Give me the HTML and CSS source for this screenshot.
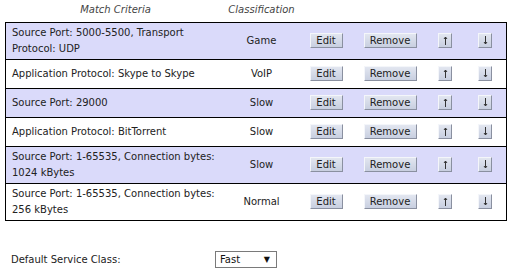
FILE: index.html
```html
<!DOCTYPE html>
<html lang="en">
<head>
    <meta charset="UTF-8">
    <title>QoS Classification Rules</title>
    <link rel="stylesheet" href="styles.css">
</head>
<body>
    <table class="rules">
        <colgroup>
            <col class="col-criteria">
            <col class="col-class">
            <col class="col-edit">
            <col class="col-remove">
            <col class="col-up">
            <col class="col-down">
        </colgroup>
        <thead>
            <tr>
                <th>Match Criteria</th>
                <th>Classification</th>
                <th></th>
                <th></th>
                <th></th>
                <th></th>
            </tr>
        </thead>
        <tbody>
            <tr class="shade">
                <td class="criteria">Source Port: 5000-5500, Transport Protocol: UDP</td>
                <td class="cls">Game</td>
                <td><button class="btn btn-edit">Edit</button></td>
                <td><button class="btn btn-remove">Remove</button></td>
                <td><button class="btn btn-arrow"><svg width="5" height="9" viewBox="0 0 5 9"><path d="M2.5 1V9M1 3L2.5 1L4 3" stroke="#333" fill="none"/></svg></button></td>
                <td><button class="btn btn-arrow"><svg width="5" height="9" viewBox="0 0 5 9"><path d="M2.5 0V8M1 6L2.5 8L4 6" stroke="#333" fill="none"/></svg></button></td>
            </tr>
            <tr>
                <td class="criteria">Application Protocol: Skype to Skype</td>
                <td class="cls">VoIP</td>
                <td><button class="btn btn-edit">Edit</button></td>
                <td><button class="btn btn-remove">Remove</button></td>
                <td><button class="btn btn-arrow"><svg width="5" height="9" viewBox="0 0 5 9"><path d="M2.5 1V9M1 3L2.5 1L4 3" stroke="#333" fill="none"/></svg></button></td>
                <td><button class="btn btn-arrow"><svg width="5" height="9" viewBox="0 0 5 9"><path d="M2.5 0V8M1 6L2.5 8L4 6" stroke="#333" fill="none"/></svg></button></td>
            </tr>
            <tr class="shade">
                <td class="criteria">Source Port: 29000</td>
                <td class="cls">Slow</td>
                <td><button class="btn btn-edit">Edit</button></td>
                <td><button class="btn btn-remove">Remove</button></td>
                <td><button class="btn btn-arrow"><svg width="5" height="9" viewBox="0 0 5 9"><path d="M2.5 1V9M1 3L2.5 1L4 3" stroke="#333" fill="none"/></svg></button></td>
                <td><button class="btn btn-arrow"><svg width="5" height="9" viewBox="0 0 5 9"><path d="M2.5 0V8M1 6L2.5 8L4 6" stroke="#333" fill="none"/></svg></button></td>
            </tr>
            <tr>
                <td class="criteria">Application Protocol: BitTorrent</td>
                <td class="cls">Slow</td>
                <td><button class="btn btn-edit">Edit</button></td>
                <td><button class="btn btn-remove">Remove</button></td>
                <td><button class="btn btn-arrow"><svg width="5" height="9" viewBox="0 0 5 9"><path d="M2.5 1V9M1 3L2.5 1L4 3" stroke="#333" fill="none"/></svg></button></td>
                <td><button class="btn btn-arrow"><svg width="5" height="9" viewBox="0 0 5 9"><path d="M2.5 0V8M1 6L2.5 8L4 6" stroke="#333" fill="none"/></svg></button></td>
            </tr>
            <tr class="shade">
                <td class="criteria">Source Port: 1-65535, Connection bytes: 1024 kBytes</td>
                <td class="cls">Slow</td>
                <td><button class="btn btn-edit">Edit</button></td>
                <td><button class="btn btn-remove">Remove</button></td>
                <td><button class="btn btn-arrow"><svg width="5" height="9" viewBox="0 0 5 9"><path d="M2.5 1V9M1 3L2.5 1L4 3" stroke="#333" fill="none"/></svg></button></td>
                <td><button class="btn btn-arrow"><svg width="5" height="9" viewBox="0 0 5 9"><path d="M2.5 0V8M1 6L2.5 8L4 6" stroke="#333" fill="none"/></svg></button></td>
            </tr>
            <tr>
                <td class="criteria">Source Port: 1-65535, Connection bytes: 256 kBytes</td>
                <td class="cls">Normal</td>
                <td><button class="btn btn-edit">Edit</button></td>
                <td><button class="btn btn-remove">Remove</button></td>
                <td><button class="btn btn-arrow"><svg width="5" height="9" viewBox="0 0 5 9"><path d="M2.5 1V9M1 3L2.5 1L4 3" stroke="#333" fill="none"/></svg></button></td>
                <td><button class="btn btn-arrow"><svg width="5" height="9" viewBox="0 0 5 9"><path d="M2.5 0V8M1 6L2.5 8L4 6" stroke="#333" fill="none"/></svg></button></td>
            </tr>
        </tbody>
    </table>

    <div class="default-row">
        <span class="default-label">Default Service Class:</span>
        <span class="select-box">
            <span class="select-value">Fast</span>
            <span class="select-arrow">&#9660;</span>
        </span>
    </div>
</body>
</html>
```

FILE: styles.css
```css
* {
    box-sizing: border-box;
}

body {
    margin: 0;
    padding: 0 6px 0 5px;
    background: #fff;
    font-family: 'DejaVu Sans', Verdana, sans-serif;
    font-size: 10px;
    color: #222;
}

.rules {
    width: 501px;
    border-collapse: collapse;
    table-layout: fixed;
}

.col-criteria { width: 220px; }
.col-class { width: 72px; }
.col-edit { width: 57px; }
.col-remove { width: 71px; }
.col-up { width: 39px; }
.col-down { width: 42px; }

.rules th {
    height: 22px;
    padding: 0 0 3px;
    font-weight: normal;
    font-style: italic;
    color: #444;
    text-align: center;
    vertical-align: middle;
}

.rules tbody {
    border: 1px solid #000;
}

.rules tbody tr {
    border-bottom: 1px solid #000;
}

.rules tbody tr.shade {
    background: #dadafa;
}

.rules td {
    height: 29px;
    padding: 2px 6px;
    line-height: 16px;
    text-align: center;
    vertical-align: middle;
}

.rules td.criteria {
    text-align: left;
}

.btn {
    height: 15px;
    padding: 0;
    font-family: inherit;
    font-size: 10px;
    line-height: 13px;
    color: #222;
    background: linear-gradient(#e2e6f0, #c8cfe0);
    border: 1px solid;
    border-color: #f4f6fa #8a90a0 #8a90a0 #f4f6fa;
    border-radius: 0;
    vertical-align: middle;
}

.btn-edit { width: 33px; }
.btn-remove { width: 53px; }

.btn-arrow {
    display: inline-flex;
    align-items: center;
    justify-content: center;
    width: 14px;
}

.btn-arrow svg {
    display: block;
}

.default-row {
    display: flex;
    align-items: center;
    margin-top: 30px;
    padding-left: 6px;
}

.default-label {
    width: 204px;
}

.select-box {
    display: flex;
    align-items: center;
    justify-content: space-between;
    width: 62px;
    height: 17px;
    padding: 0 6px 0 4px;
    border: 1px solid #7a7a7a;
    background: #fff;
}

.select-value {
    font-size: 10px;
    color: #111;
}

.select-arrow {
    font-size: 8px;
    color: #111;
}
```
